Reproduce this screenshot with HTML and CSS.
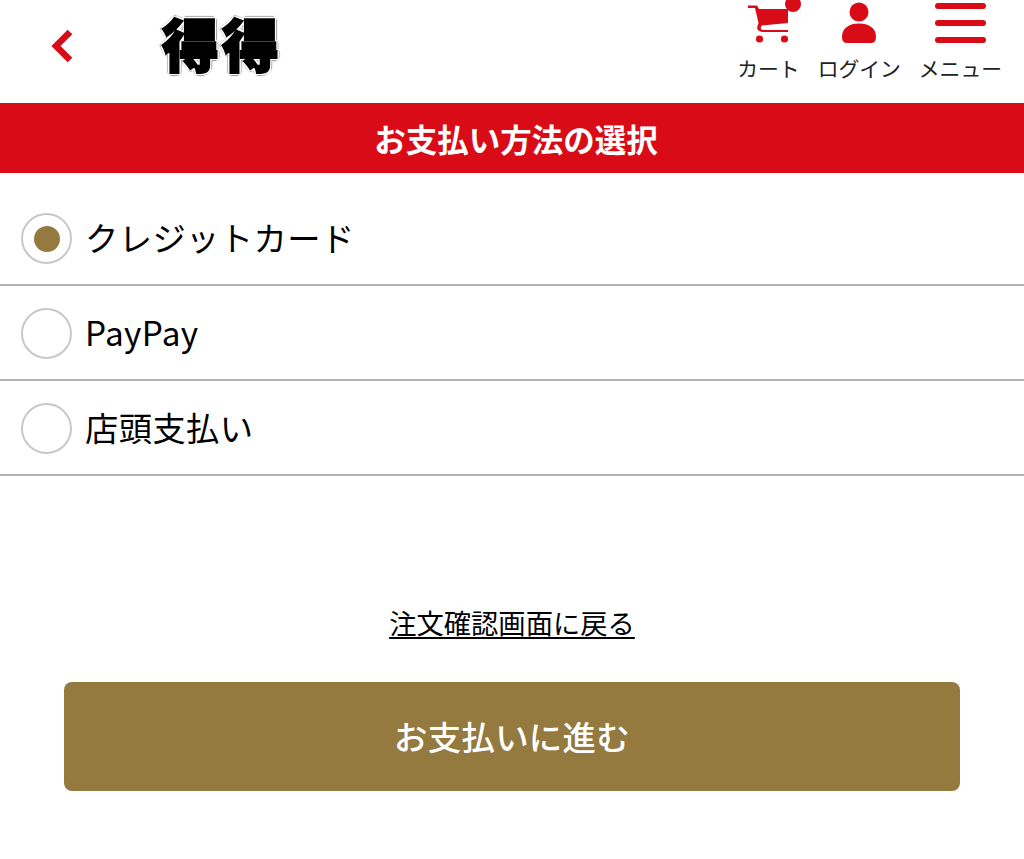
FILE: index.html
```html
<!DOCTYPE html>
<html lang="ja">
<head>
    <meta charset="UTF-8" />
    <meta name="viewport" content="width=device-width, initial-scale=1" />
    <title>お支払い方法の選択</title>
    <link rel="stylesheet" href="styles.css">
</head>
<body>
    <header class="site-header">
        <a class="back" href="#" aria-label="戻る">
            <svg width="24" height="34" viewBox="0 0 24 34"><path d="M20 3 L6 17 L20 31" fill="none" stroke="#d90b17" stroke-width="6.5"/></svg>
        </a>
        <a class="logo" href="#">得得</a>
        <nav class="nav">
            <a class="nav-item" href="#">
                <span class="nav-icon cart-icon">
                    <svg width="56" height="44" viewBox="0 0 56 44">
                        <path d="M1 5.5 H10 L12 9 H41 V23 L14.5 25.5 L14 27.5 Q13 29.5 16 30 H41 V32 H15 Q9 31 10.5 26 L11.5 23 L8 8 H1 Z" fill="#d90b17"/>
                        <circle cx="12.5" cy="39" r="3.6" fill="#d90b17"/>
                        <circle cx="37.5" cy="39" r="3.6" fill="#d90b17"/>
                        <circle cx="46" cy="4" r="8" fill="#d90b17"/>
                    </svg>
                </span>
                <span class="nav-label">カート</span>
            </a>
            <a class="nav-item" href="#">
                <span class="nav-icon">
                    <svg width="36" height="44" viewBox="0 0 36 44">
                        <circle cx="18" cy="12" r="9.5" fill="#d90b17"/>
                        <path d="M1 37 C1 28 8 23.5 18 23.5 C28 23.5 35 28 35 37 Q35 43 30 43 H6 Q1 43 1 37 Z" fill="#d90b17"/>
                    </svg>
                </span>
                <span class="nav-label">ログイン</span>
            </a>
            <a class="nav-item" href="#">
                <span class="nav-icon">
                    <span class="menu-bars"><i></i><i></i><i></i></span>
                </span>
                <span class="nav-label">メニュー</span>
            </a>
        </nav>
    </header>

    <h1 class="page-title">お支払い方法の選択</h1>

    <form class="pay-form">
        <ul class="pay-list">
            <li class="pay-row">
                <label class="pay-option">
                    <span class="radio is-checked"></span>
                    <span class="pay-text">クレジットカード</span>
                </label>
            </li>
            <li class="pay-row">
                <label class="pay-option">
                    <span class="radio"></span>
                    <span class="pay-text">PayPay</span>
                </label>
            </li>
            <li class="pay-row">
                <label class="pay-option">
                    <span class="radio"></span>
                    <span class="pay-text">店頭支払い</span>
                </label>
            </li>
        </ul>

        <p class="back-link"><a href="#">注文確認画面に戻る</a></p>
        <button class="submit" type="button">お支払いに進む</button>
    </form>
</body>
</html>
```

FILE: styles.css
```css
* {
    box-sizing: border-box;
}
body {
    margin: 0;
    background: #fff;
    color: #000;
    font-family: "Noto Sans CJK JP", "Noto Sans", sans-serif;
}
a {
    color: inherit;
    text-decoration: none;
}
.site-header {
    display: flex;
    align-items: flex-start;
    height: 103px;
    padding-left: 50px;
}
.back {
    display: block;
    margin-top: 29px;
    width: 24px;
    height: 34px;
}
.back svg {
    display: block;
}
.logo {
    margin-left: 88px;
    margin-top: 2px;
    font-size: 57px;
    line-height: 80px;
    font-weight: 900;
    letter-spacing: 3px;
    color: #000;
    -webkit-text-stroke: 2px #000;
    text-shadow:
        2px 0 0 #fff, -2px 0 0 #fff, 0 2px 0 #fff, 0 -2px 0 #fff,
        2px 2px 0 #fff, -2px 2px 0 #fff, 2px -2px 0 #fff, -2px -2px 0 #fff,
        3px 0 1px #999, -3px 0 1px #999, 0 3px 1px #999, 0 -3px 1px #999,
        2px 2px 1px #999, -2px 2px 1px #999, 2px -2px 1px #999, -2px -2px 1px #999;
}
.nav {
    display: flex;
    margin-left: auto;
    padding-right: 22px;
    gap: 18px;
}
.nav-item {
    display: flex;
    flex-direction: column;
    align-items: center;
}
.nav-icon {
    display: flex;
    justify-content: center;
    height: 44px;
    margin-bottom: 9px;
}
.cart-icon {
    margin-left: 10px;
    margin-right: -4px;
}
.nav-label {
    font-size: 20.8px;
    line-height: 30px;
    color: #222;
}
.menu-bars {
    display: flex;
    flex-direction: column;
    gap: 11px;
    width: 51px;
    padding-top: 3px;
}
.menu-bars i {
    display: block;
    height: 6px;
    border-radius: 3px;
    background: #d90b17;
}
.page-title {
    margin: 0;
    height: 70px;
    padding-left: 8px;
    background: #d90b17;
    color: #fff;
    font-size: 31.5px;
    line-height: 71px;
    font-weight: 700;
    text-align: center;
}
.pay-list {
    list-style: none;
    margin: 18px 0 0;
    padding: 0;
}
.pay-row {
    height: 95px;
    border-bottom: 2px solid #b4b4b4;
}
.pay-option {
    display: flex;
    align-items: center;
    gap: 13px;
    height: 93px;
    padding-top: 2px;
    padding-left: 21px;
    font-size: 33.3px;
    letter-spacing: 0.4px;
}
.pay-text {
    padding-bottom: 4px;
}
.radio {
    display: flex;
    align-items: center;
    justify-content: center;
    width: 51px;
    height: 51px;
    border: 2px solid #c8c8c8;
    border-radius: 50%;
    flex: none;
}
.radio.is-checked::before {
    content: "";
    width: 26px;
    height: 26px;
    border-radius: 50%;
    background: #947a3f;
}
.back-link {
    margin: 124px 0 0;
    text-align: center;
    font-size: 27.3px;
    line-height: 44px;
}
.back-link a {
    text-decoration: underline;
    text-underline-offset: 3px;
}
.submit {
    display: block;
    width: 896px;
    height: 109px;
    margin: 38px auto 0;
    padding-bottom: 4px;
    border: none;
    border-radius: 8px;
    background: #947a3f;
    color: #fff;
    font-family: inherit;
    font-size: 33.4px;
    font-weight: 500;
    letter-spacing: 0.3px;
}
```
